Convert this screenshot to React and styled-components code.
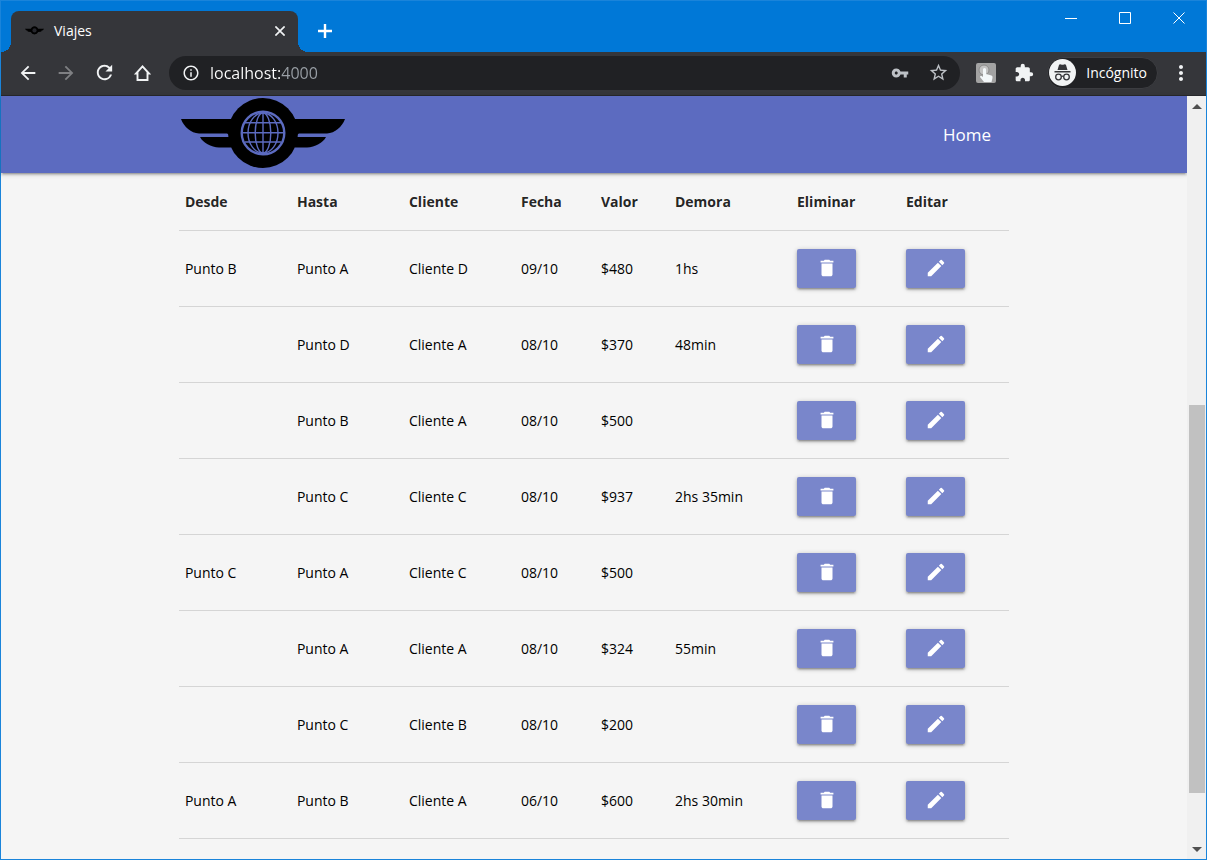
import React from "react";
import styled, { createGlobalStyle, css } from "styled-components";
import {
  MdArrowBack,
  MdArrowForward,
  MdRefresh,
  MdInfoOutline,
  MdVpnKey,
  MdStarBorder,
  MdExtension,
  MdMoreVert,
  MdDelete,
  MdEdit,
} from "react-icons/md";

const GlobalStyle = createGlobalStyle`
  *, *::before, *::after { box-sizing: border-box; }
  body {
    margin: 0;
    font-family: "Open Sans", "Noto Sans", sans-serif;
    font-size: 14px;
    line-height: 20px;
    color: rgba(0, 0, 0, 0.87);
  }
  button { font: inherit; color: inherit; }
`;

const Window = styled.div`
  display: flex;
  flex-direction: column;
  min-height: 100vh;
  border: 1px solid #1a84da;
  background: #f5f5f5;
`;

const TitleBar = styled.header`
  display: flex;
  align-items: flex-end;
  height: 51px;
  padding-left: 10px;
  background: #0078d7;
  color: #fff;
`;

const Tab = styled.div`
  position: relative;
  display: flex;
  align-items: center;
  gap: 10px;
  flex: 0 1 287px;
  height: 41px;
  padding: 0 8px 2px 14px;
  border-radius: 8px 8px 0 0;
  background: #35363a;

  &::before,
  &::after {
    content: "";
    position: absolute;
    bottom: 0;
    width: 10px;
    height: 10px;
  }
  &::before {
    right: 100%;
    background: radial-gradient(circle at 0 0, transparent 10px, #35363a 10px);
  }
  &::after {
    left: 100%;
    background: radial-gradient(circle at 100% 0, transparent 10px, #35363a 10px);
  }
`;

const TabTitle = styled.span`
  flex: 1;
`;

const PlainButton = styled.button`
  display: flex;
  align-items: center;
  justify-content: center;
  flex: none;
  width: ${(p) => p.$width}px;
  height: ${(p) => p.$height || p.$width}px;
  padding: 0;
  border: 0;
  background: none;
  color: ${(p) => p.$color || "#f1f3f4"};
`;

const NewTab = styled(PlainButton)`
  margin: 0 auto 0 12px;
  padding-bottom: 2px;
`;

const WindowControls = styled.div`
  display: flex;
  align-self: flex-start;
`;

const Toolbar = styled.div`
  display: flex;
  align-items: center;
  height: 44px;
  padding: 0 6px 2px 8px;
  border-bottom: 1px solid #28292c;
  background: #35363a;
  color: #f1f3f4;
`;

const AddressBar = styled.div`
  display: flex;
  align-items: center;
  flex: 1;
  height: 34px;
  margin: 0 7px 0 8px;
  padding: 0 3px 0 13px;
  border-radius: 17px;
  background: #202124;
`;

const AddressInput = styled.input`
  flex: 1;
  min-width: 0;
  height: 24px;
  margin-left: 10px;
  padding: 0;
  border: 0;
  outline: 0;
  font: 16px/24px "Open Sans", "Noto Sans", sans-serif;
  background: linear-gradient(90deg, #fff 70px, #9aa0a6 70px);
  background-clip: text;
  color: transparent;
`;

const Incognito = styled.button`
  display: flex;
  align-items: center;
  gap: 10px;
  height: 32px;
  margin: 0 4px;
  padding: 0 10px 0 1px;
  border: 1px solid #3c3d41;
  border-radius: 16px;
  background: #202124;
  color: #fff;
`;

const Viewport = styled.div`
  display: flex;
  flex: 1;
`;

const Page = styled.div`
  flex: 1;
  min-width: 0;
  padding-bottom: 20px;
  background: #f5f5f5;
`;

const NavBar = styled.nav`
  height: 77px;
  background: #5c6bc0;
  box-shadow: 0 2px 2px rgba(0, 0, 0, 0.14), 0 3px 1px -2px rgba(0, 0, 0, 0.12),
    0 1px 5px rgba(0, 0, 0, 0.2);
`;

const container = css`
  width: 70%;
  margin: 0 auto;
`;

const NavContent = styled.div`
  ${container}
  display: flex;
  align-items: flex-start;
  justify-content: space-between;
  height: 100%;
  padding: 2px 18px 2px 2px;
`;

const HomeLink = styled.a`
  align-self: center;
  font-size: 17px;
  line-height: 24px;
  color: #fff;
  text-decoration: none;
`;

const TripsTable = styled.table`
  ${container}
  table-layout: fixed;
  border-collapse: collapse;
`;

const Row = styled.tr`
  height: ${(p) => (p.$head ? 57 : 76)}px;
  border-bottom: 1px solid #d5d5d5;
`;

const HeadCell = styled.th`
  padding: 2px 6px 0;
  text-align: left;
  font-weight: 700;
`;

const Cell = styled.td`
  padding: 2px 6px 0;
  font-weight: 380;
  color: #000;
`;

const ActionCell = styled.td`
  padding: 0 6px;
`;

const ActionButton = styled.button`
  display: flex;
  align-items: center;
  justify-content: center;
  width: 59px;
  height: 39px;
  padding: 0;
  border: 0;
  border-radius: 2px;
  background: #7986cb;
  color: #fff;
  box-shadow: 0 2px 2px rgba(0, 0, 0, 0.18), 0 3px 1px -2px rgba(0, 0, 0, 0.12),
    0 1px 5px rgba(0, 0, 0, 0.24);
`;

const Scrollbar = styled.div`
  display: flex;
  flex-direction: column;
  width: 19px;
  padding: 0 1px 0 2px;
  background: #f0f0f0;
`;

const ScrollSpace = styled.div`
  flex: ${(p) => p.$grow} 0 0;
`;

const ScrollThumb = styled.div`
  flex: 388 0 0;
  background: #c1c1c1;
`;

const Logo = ({ width }) => (
  <svg width={width} viewBox="0 0 164 71" role="img" aria-label="Viajes">
    <path d="M0 21H50V38L46 35.500H18C10 35 3 29 0 21Z" />
    <path d="M19 39H50V49.500H38C30 49 22 45 19 39Z" />
    <path d="M164 21H114V38L118 35.500H146C154 35 161 29 164 21Z" />
    <path d="M145 39H114V49.500H126C134 49 142 45 145 39Z" />
    <circle cx="82" cy="35" r="35" />
    <g fill="none" stroke="#5c6bc0" strokeWidth="1.4">
      <circle cx="82" cy="35" r="21.3" strokeWidth="2.400" />
      <ellipse cx="82" cy="35" rx="15" ry="20" />
      <ellipse cx="82" cy="35" rx="7.800" ry="20" />
      <path d="M82 14V56M61 34.700H103M64 24.700H100M64 44H100" />
    </g>
  </svg>
);

const HomeIcon = () => (
  <svg width="18" height="18" viewBox="0 0 18 18" fill="none" stroke="currentColor" strokeWidth="1.900">
    <path d="M9.500 2.300L16 9.500H14.500V16H4.500V9.500H3Z" />
  </svg>
);

const IncognitoIcon = () => (
  <svg width="27" height="27" viewBox="0 0 27 27">
    <circle cx="13.5" cy="13.5" r="13.5" fill="#f1f3f4" />
    <path d="M8.500 11L10 6Q10.500 5 12 5.500Q13.500 6 15 5.500Q16.500 5 17 6L18.500 11Z" fill="#35363a" />
    <path d="M5.500 12H21.500V13.500H5.500Z" fill="#35363a" />
    <g fill="none" stroke="#35363a" strokeWidth="1.300">
      <circle cx="9.500" cy="18" r="2.800" />
      <circle cx="17.500" cy="18" r="2.800" />
      <path d="M12.300 17.500Q13.500 16.800 14.700 17.500" />
    </g>
  </svg>
);

const TouchIcon = () => (
  <svg width="20" height="20" viewBox="0 0 20 20">
    <rect width="20" height="20" rx="2" fill="#a3a3a3" />
    <circle cx="8" cy="7" r="5" fill="#c4c4c4" stroke="#8a8a8a" />
    <path d="M7 6Q8.500 4 10 6V11L15.500 12.500Q17 13 16.500 15L15.500 19H8L4 14Q4 12.500 5.500 13L7 14Z" fill="#f4f8fa" />
  </svg>
);

const Cross = ({ size, stroke = 1 }) => (
  <svg width={size} height={size} viewBox="0 0 12 12" fill="none" stroke="currentColor" strokeWidth={stroke}>
    <path d="M0.500 0.500L11.500 11.500M11.500 0.500L0.500 11.500" />
  </svg>
);

const Arrow = ({ down }) => (
  <svg width="10" height="5" viewBox="0 0 10 5" fill="#505050">
    <path d={down ? "M0 0H10L5 5Z" : "M0 5H10L5 0Z"} />
  </svg>
);

const columns = [
  ["Desde", 112],
  ["Hasta", 112],
  ["Cliente", 112],
  ["Fecha", 80],
  ["Valor", 74],
  ["Demora", 122],
  ["Eliminar", 109],
  ["Editar", 109],
];

const trips = [
  ["Punto B", "Punto A", "Cliente D", "09/10", "$480", "1hs"],
  ["", "Punto D", "Cliente A", "08/10", "$370", "48min"],
  ["", "Punto B", "Cliente A", "08/10", "$500", ""],
  ["", "Punto C", "Cliente C", "08/10", "$937", "2hs 35min"],
  ["Punto C", "Punto A", "Cliente C", "08/10", "$500", ""],
  ["", "Punto A", "Cliente A", "08/10", "$324", "55min"],
  ["", "Punto C", "Cliente B", "08/10", "$200", ""],
  ["Punto A", "Punto B", "Cliente A", "06/10", "$600", "2hs 30min"],
];

export default function App() {
  return (
    <Window>
      <GlobalStyle />
      <TitleBar>
        <Tab>
          <svg width="19" height="9" viewBox="0 0 164 71" aria-hidden="true">
            <path d="M0 21H50L60 8Q82-10 104 8L114 21H164Q158 37 140 37L145 40Q140 49 114 49Q105 70 82 70Q59 70 50 49Q24 49 19 40L24 37Q6 37 0 21Z" />
            <circle cx="82" cy="35" r="18" fill="#25262c" />
          </svg>
          <TabTitle>Viajes</TabTitle>
          <PlainButton $width={20} aria-label="Cerrar pestaña">
            <Cross size={10} stroke={2} />
          </PlainButton>
        </Tab>
        <NewTab $width={30} $height={41} $color="#fff" aria-label="Nueva pestaña">
          <svg width="14" height="14" viewBox="0 0 14 14" stroke="currentColor" strokeWidth="2.400">
            <path d="M7 0V14M0 7H14" />
          </svg>
        </NewTab>
        <WindowControls>
          <PlainButton $width={54} $height={34} $color="#fff" aria-label="Minimizar">
            <svg width="12" height="12" viewBox="0 0 12 12" stroke="currentColor">
              <path d="M0 6.500H12" />
            </svg>
          </PlainButton>
          <PlainButton $width={54} $height={34} $color="#fff" aria-label="Maximizar">
            <svg width="12" height="12" viewBox="0 0 12 12" fill="none" stroke="currentColor">
              <path d="M0.500 0.500H11.500V11.500H0.500Z" />
            </svg>
          </PlainButton>
          <PlainButton $width={54} $height={34} $color="#fff" aria-label="Cerrar">
            <Cross size={12} />
          </PlainButton>
        </WindowControls>
      </TitleBar>

      <Toolbar>
        <PlainButton $width={38} aria-label="Atrás"><MdArrowBack size={22} /></PlainButton>
        <PlainButton $width={38} $color="#7f8083" aria-label="Adelante"><MdArrowForward size={22} /></PlainButton>
        <PlainButton $width={38} aria-label="Recargar"><MdRefresh size={23} /></PlainButton>
        <PlainButton $width={38} aria-label="Inicio"><HomeIcon /></PlainButton>
        <AddressBar>
          <MdInfoOutline size={18} />
          <AddressInput aria-label="Dirección" defaultValue="localhost:4000" />
          <PlainButton $width={38} $height={34} $color="#bdc1c6" aria-label="Contraseñas"><MdVpnKey size={18} /></PlainButton>
          <PlainButton $width={38} $height={34} $color="#bdc1c6" aria-label="Favoritos"><MdStarBorder size={21} /></PlainButton>
        </AddressBar>
        <PlainButton $width={38} aria-label="Extensión"><TouchIcon /></PlainButton>
        <PlainButton $width={38} aria-label="Extensiones"><MdExtension size={20} /></PlainButton>
        <Incognito>
          <IncognitoIcon />
          Incógnito
        </Incognito>
        <PlainButton $width={38} aria-label="Menú"><MdMoreVert size={24} /></PlainButton>
      </Toolbar>

      <Viewport>
        <Page>
          <NavBar>
            <NavContent>
              <Logo width={164} />
              <HomeLink href="#">Home</HomeLink>
            </NavContent>
          </NavBar>
          <TripsTable>
            <colgroup>
              {columns.map(([name, width]) => (
                <col key={name} width={width} />
              ))}
            </colgroup>
            <thead>
              <Row $head>
                {columns.map(([name]) => (
                  <HeadCell key={name} scope="col">{name}</HeadCell>
                ))}
              </Row>
            </thead>
            <tbody>
              {trips.map((trip, i) => (
                <Row key={i}>
                  {trip.map((value, j) => (
                    <Cell key={j}>{value}</Cell>
                  ))}
                  <ActionCell>
                    <ActionButton aria-label="Eliminar"><MdDelete size={22} /></ActionButton>
                  </ActionCell>
                  <ActionCell>
                    <ActionButton aria-label="Editar"><MdEdit size={22} /></ActionButton>
                  </ActionCell>
                </Row>
              ))}
            </tbody>
          </TripsTable>
        </Page>
        <Scrollbar>
          <PlainButton $width={16} $height={20} aria-label="Subir"><Arrow /></PlainButton>
          <ScrollSpace $grow={289} />
          <ScrollThumb />
          <ScrollSpace $grow={46} />
          <PlainButton $width={16} $height={20} aria-label="Bajar"><Arrow down /></PlainButton>
        </Scrollbar>
      </Viewport>
    </Window>
  );
}
